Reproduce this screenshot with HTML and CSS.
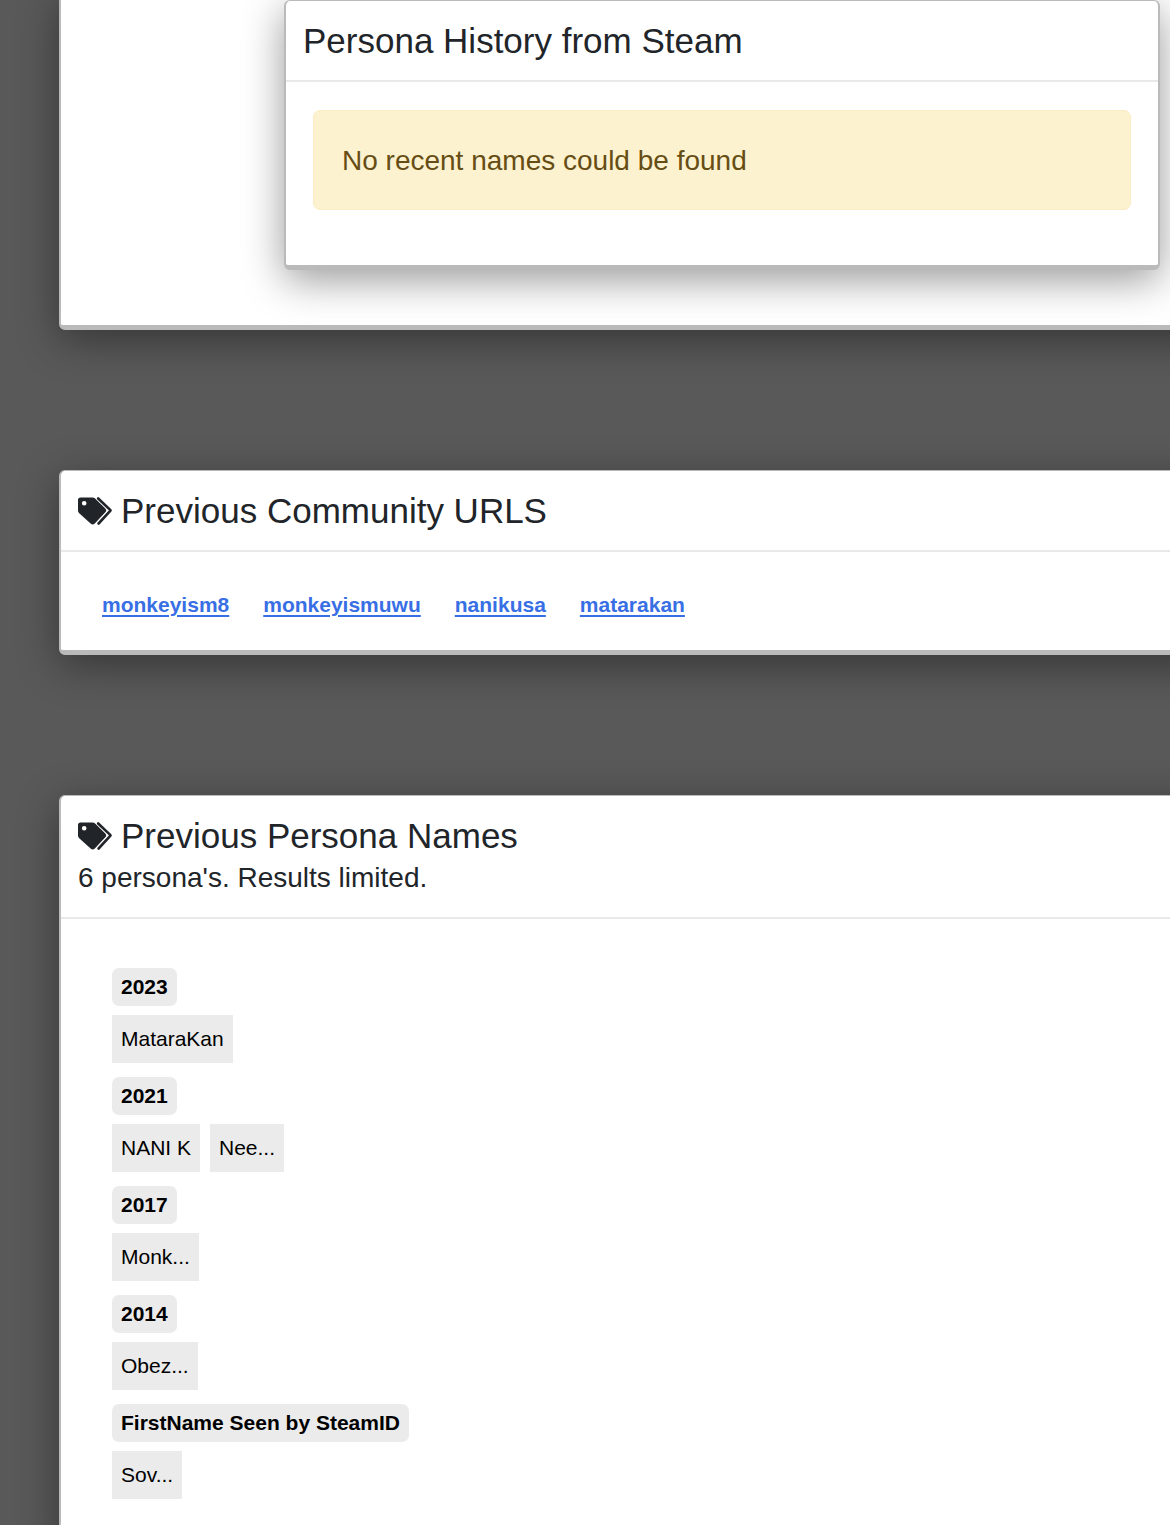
FILE: index.html
```html
<!DOCTYPE html>
<html lang="en">
<head>
<meta charset="utf-8">
<meta name="viewport" content="width=device-width, initial-scale=1">
<title>Persona History</title>
<link rel="stylesheet" href="styles.css">
</head>
<body>
<svg class="sprite" aria-hidden="true">
  <symbol id="tags" viewBox="0 0 35 28">
    <path fill-rule="evenodd" d="M2.500 0.500H14.500Q16 0.500 17.100 1.500L27.300 11.500Q29.100 13.400 27.300 15.300L16.800 26.600Q14.700 28.600 12.600 26.600L1.200 16.200Q0 15.100 0 13.500V3Q0 0.500 2.500 0.500ZM6.200 4A2.300 2.300 0 1 0 6.200 8.600A2.300 2.300 0 1 0 6.200 4Z"/>
    <path d="M20.200 1.500L32.200 12.900Q32.700 13.400 32.200 13.900L20.600 26.500" fill="none" stroke="currentColor" stroke-width="2.600" stroke-linecap="round"/>
  </symbol>
</svg>
<main class="page">
  <section class="card card-outer">
    <article class="card card-inner">
      <header class="card-header">
        <h2 class="card-title">Persona History from Steam</h2>
      </header>
      <div class="inner-body">
        <div class="alert" role="alert">No recent names could be found</div>
      </div>
    </article>
  </section>

  <section class="card">
    <header class="card-header">
      <h2 class="card-title"><svg class="icon" aria-hidden="true"><use href="#tags"/></svg>Previous Community URLS</h2>
    </header>
    <nav class="url-list" aria-label="Previous community URLs">
      <a href="#monkeyism8">monkeyism8</a>
      <a href="#monkeyismuwu">monkeyismuwu</a>
      <a href="#nanikusa">nanikusa</a>
      <a href="#matarakan">matarakan</a>
    </nav>
  </section>

  <section class="card card-last">
    <header class="card-header">
      <h2 class="card-title"><svg class="icon" aria-hidden="true"><use href="#tags"/></svg>Previous Persona Names</h2>
      <p class="card-subtitle">6 persona's. Results limited.</p>
    </header>
    <div class="years">
      <section class="year">
        <h3 class="badge">2023</h3>
        <div class="names"><span class="name">MataraKan</span></div>
      </section>
      <section class="year">
        <h3 class="badge">2021</h3>
        <div class="names"><span class="name">NANI K</span><span class="name">Nee...</span></div>
      </section>
      <section class="year">
        <h3 class="badge">2017</h3>
        <div class="names"><span class="name">Monk...</span></div>
      </section>
      <section class="year">
        <h3 class="badge">2014</h3>
        <div class="names"><span class="name">Obez...</span></div>
      </section>
      <section class="year">
        <h3 class="badge">FirstName Seen by SteamID</h3>
        <div class="names"><span class="name">Sov...</span></div>
      </section>
    </div>
  </section>
</main>
</body>
</html>
```
FILE: styles.css
```css
* {
  box-sizing: border-box;
}

body {
  margin: 0;
  background: #595959;
  color: #212529;
  font-family: "Liberation Sans", Arial, sans-serif;
  font-size: 28px;
  line-height: 42px;
}

h2,
h3,
p {
  margin: 0;
}

.sprite {
  display: none;
}

.page {
  display: flex;
  flex-direction: column;
  gap: 140px;
  min-height: 100vh;
  padding-left: 59px;
  overflow: hidden;
}

.card {
  margin-right: -60px;
  background: #fff;
  border: 2px solid #bababa;
  border-top-width: 1px;
  border-bottom-width: 5px;
  border-radius: 6px;
  box-shadow: 0 10px 40px rgba(0, 0, 0, 0.4);
}

.card-outer {
  margin-top: -10px;
  padding: 9px 68px 55px 223px;
}

.card-inner {
  margin-right: 0;
}

.card-last {
  flex: 1;
  margin-bottom: -20px;
}

.card-header {
  padding: 19px 17px 18px;
  border-bottom: 2px solid #e9e9e9;
}

.card-title {
  display: flex;
  align-items: center;
  gap: 8px;
  font-size: 35px;
  font-weight: 400;
}

.card-subtitle {
  font-size: 28px;
}

.icon {
  width: 35px;
  height: 28px;
  fill: currentColor;
}

.inner-body {
  padding: 28px 27px 55px;
}

.alert {
  padding: 29px 28px 27px;
  background: #fcf2cf;
  border: 1px solid #fbecc4;
  border-radius: 7px;
  color: #664d14;
}

.url-list {
  display: flex;
  flex-wrap: wrap;
  gap: 34px;
  padding: 37px 41px 29px;
  font-size: 21px;
  font-weight: 700;
  line-height: 32px;
}

.url-list a {
  color: #386fe5;
  text-decoration-thickness: 2px;
  text-underline-offset: 3px;
}

.years {
  display: flex;
  flex-direction: column;
  gap: 14px;
  padding: 49px 51px 46px;
  color: #000;
  font-size: 21px;
}

.year {
  display: flex;
  flex-direction: column;
  align-items: flex-start;
  gap: 9px;
}

.badge {
  padding: 3px 9px;
  background: #ebebeb;
  border-radius: 7px;
  font-size: 21px;
  line-height: 32px;
}

.names {
  display: flex;
  gap: 10px;
}

.name {
  padding: 8px 9px;
  background: #ebebeb;
  line-height: 32px;
}
```
